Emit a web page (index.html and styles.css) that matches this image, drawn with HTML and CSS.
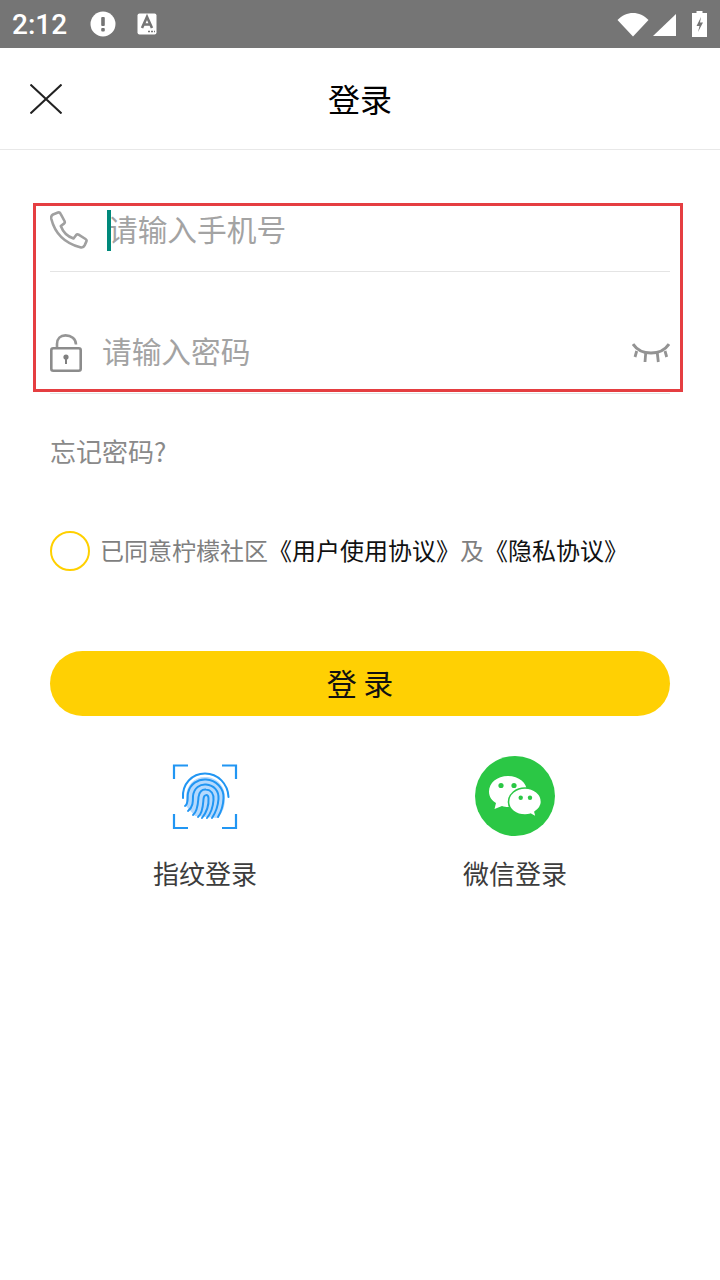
FILE: index.html
```html
<!DOCTYPE html>
<html lang="zh">

<head>
    <meta charset="UTF-8">
    <meta name="viewport" content="width=device-width, initial-scale=1.0">
    <title>登录</title>
    <link rel="stylesheet" href="styles.css">
</head>

<body>
    <div class="status-bar">
        <span class="time">2:12</span>
        <svg class="status-alert" width="26" height="26" viewBox="0 0 26 26">
            <circle cx="13" cy="13" r="12.5" fill="#fff" />
            <rect x="11.2" y="6" width="3.6" height="9" rx="1" fill="#757575" />
            <rect x="11.2" y="17" width="3.6" height="3.4" rx="1" fill="#757575" />
        </svg>
        <svg class="status-a" width="20" height="22" viewBox="0 0 20 22">
            <rect x="0.5" y="0.5" width="19" height="21" rx="2" fill="#fff" />
            <path d="M5 15 L10 4 L15 15 M7 11.5 H13" fill="none" stroke="#757575" stroke-width="2.6" />
            <path d="M11 18.5h2M14 18.5h2M17 18.5h1" stroke="#757575" stroke-width="1.6" />
        </svg>
        <span class="status-right">
            <svg class="wifi" width="32" height="25" viewBox="0 0 32 25">
                <path d="M0.5 8 C9 -1.5 23 -1.5 31.5 8 L16 24.5 Z" fill="#fff" />
            </svg>
            <svg class="signal" width="23" height="22" viewBox="0 0 23 22">
                <path d="M0 22 L23 0 V22 Z" fill="#fff" />
            </svg>
            <svg class="battery" width="15" height="26" viewBox="0 0 15 26">
                <path d="M4.5 0 H10.5 V2 H15 V26 H0 V2 H4.5 Z" fill="#fff" />
                <path d="M9 6 L4.5 15 H7.5 L6 21 L11 11.5 H8 Z" fill="#757575" />
            </svg>
        </span>
    </div>

    <header class="top-bar">
        <svg class="close-icon" width="32" height="30" viewBox="0 0 32 30">
            <path d="M0.5 0.5 L31.5 29.5 M31.5 0.5 L0.5 29.5" stroke="#222" stroke-width="2" fill="none" />
        </svg>
        <h1>登录</h1>
    </header>

    <main class="form">
        <div class="field field-phone">
            <svg class="field-icon" width="38" height="38" viewBox="0 0 38 38">
                <path d="M3 3.5 L8 1.5 C9 1.2 10 1.6 10.5 2.6 L14.5 10 C15 11 14.8 12 14 12.6 L10.8 15 C13 21 17.5 25.5 23.5 27.5 L26 24.2 C26.7 23.4 27.7 23.2 28.6 23.7 L35.5 28 C36.5 28.6 36.8 29.6 36.3 30.6 L34.6 34.4 C33.8 36 32 36.8 30.2 36.3 C14 32 4.5 21 1.2 7.5 C0.9 5.8 1.6 4.3 3 3.5 Z" fill="none" stroke="#a0a0a0" stroke-width="2.6" stroke-linejoin="round" />
            </svg>
            <span class="caret"></span>
            <span class="hint">请输入手机号</span>
        </div>
        <div class="field field-password">
            <svg class="field-icon" width="32" height="38" viewBox="0 0 32 38">
                <path d="M7 14 V10 C7 4.5 10.5 1.4 15.5 1.4 C21 1.4 26 4.5 26 10.5" fill="none" stroke="#959595" stroke-width="2.6" />
                <rect x="1.3" y="14.3" width="29.4" height="22.4" rx="2" fill="none" stroke="#8c8c8c" stroke-width="2.6" />
                <circle cx="16" cy="23" r="2.6" fill="#808080" />
                <rect x="15" y="23" width="2" height="7" fill="#808080" />
            </svg>
            <span class="hint">请输入密码</span>
            <svg class="eye-icon" width="38" height="20" viewBox="0 0 38 20">
                <path d="M1 1 C9 13 29 13 37 1" fill="none" stroke="#939393" stroke-width="3" />
                <path d="M4.7 8 L3 14 M13.7 10 L13 19 M25.3 10 L26.3 19 M33 8 L34.7 14" fill="none" stroke="#939393" stroke-width="2.8" />
            </svg>
        </div>

        <div class="forgot">忘记密码?</div>

        <div class="agree">
            <span class="radio"></span>
            <span class="agree-text">已同意柠檬社区<b>《用户使用协议》</b>及<b>《隐私协议》</b></span>
        </div>

        <button class="login-btn">登 录</button>

        <div class="other-login">
            <div class="other-item">
                <svg width="80" height="80" viewBox="0 0 80 80">
                    <path d="M9 23 V9.5 H23 M57 9.5 H71 V23 M9 58 V72 H23 M57 72 H71 V58" fill="none" stroke="#2196f3" stroke-width="2.2" />
                    <path d="M21 42 C21 29 29 21 40 21 C51 21 60 29 60 42 C60 50 58 57 52 62 L30 60 L21 50 Z" fill="#b5d9fd" />
                    <g fill="none" stroke="#2196f3" stroke-width="2" stroke-linecap="round">
                        <path d="M18 42 C17 28 27 17.5 40 17.5 C53 17.5 63 28 63.5 41" />
                        <path d="M20 50 C24 47 22 42 23 37 C25 28 33 23 41 23.5 C51 24 59 32 58.5 42 C58.3 49 56 56 53 61" />
                        <path d="M23 55 C28 51 28 46 28 40 C29 32 35 28 41 28.5 C49 29 54 35 53.5 43 C53 50 51 56 47 62" />
                        <path d="M28 59 C33 55 33 47 33.5 41 C34 36 37 33 41 33.5 C46 34 49 38 48.5 44 C48 51 46 57 42 62" />
                        <path d="M33 61 C38 57 38 49 38.5 43 C39 38 43 38 43.5 42 C44 49 41 57 37 62" />
                    </g>
                </svg>
                <span>指纹登录</span>
            </div>
            <div class="other-item">
                <svg width="80" height="80" viewBox="0 0 80 80">
                    <circle cx="40" cy="40" r="40" fill="#2bc745" />
                    <path d="M33 20 C22 20 14 27 14 35.5 C14 41 17 44.5 21 47 L19.5 53 L27 50 C29 50.6 31 51 33.5 51 C45 51 52 43 52 35.5 C52 27 44 20 33 20 Z" fill="#fff" />
                    <circle cx="26" cy="29.5" r="2.6" fill="#2bc745" />
                    <circle cx="39" cy="29.5" r="2.6" fill="#2bc745" />
                    <path d="M50 32 C41 32 33.5 38 33.5 46 C33.5 53.5 41 59 50 59 C52 59 54 58.7 55.5 58.2 L61.5 61.5 L60 56 C63.5 53.5 66.5 50 66.5 46 C66.5 38 59 32 50 32 Z" fill="#fff" stroke="#2bc745" stroke-width="1.6" />
                    <circle cx="45.7" cy="41.7" r="2.2" fill="#2bc745" />
                    <circle cx="55" cy="41.7" r="2.2" fill="#2bc745" />
                </svg>
                <span>微信登录</span>
            </div>
        </div>
    </main>

    <div class="mark"></div>
</body>

</html>
```

FILE: styles.css
```css
body {
    font-family: "Noto Sans CJK SC", "Noto Sans", sans-serif;
    margin: 0;
    padding: 0;
    background-color: #fff;
    width: 720px;
    height: 1280px;
    overflow: hidden;
    position: relative;
}

.status-bar {
    height: 48px;
    background-color: #757575;
    display: flex;
    align-items: center;
    padding: 0 13px 0 12px;
    box-sizing: border-box;
}

.time {
    font-family: Roboto, sans-serif;
    font-size: 28px;
    font-weight: 500;
    color: #fff;
    width: 78px;
}

.status-a {
    margin-left: 21px;
}

.status-right {
    margin-left: auto;
    display: flex;
    align-items: center;
}

.signal {
    margin-left: 4px;
    margin-top: 2px;
}

.battery {
    margin-left: 16px;
}

.top-bar {
    height: 102px;
    border-bottom: 1px solid #e8e8e8;
    box-sizing: border-box;
    display: flex;
    align-items: center;
    justify-content: center;
    position: relative;
}

.top-bar h1 {
    margin: 0 0 2px;
    font-size: 32px;
    font-weight: 400;
    color: #000;
}

.close-icon {
    position: absolute;
    left: 30px;
    top: 36px;
}

.form {
    padding: 55px 50px 0;
}

.field {
    display: flex;
    align-items: center;
    border-bottom: 1px solid #e4e4e4;
    box-sizing: border-box;
    position: relative;
}

.field-phone {
    height: 67px;
    padding-bottom: 16px;
}

.field-password {
    height: 122px;
    margin-bottom: 33px;
    padding-top: 40px;
}

.hint {
    font-size: 29.7px;
    color: #a3a3a3;
    margin-bottom: 4px;
}

.field-phone .hint {
    margin-left: 20px;
}

.field-password .hint {
    margin-left: 20px;
}

.caret {
    position: absolute;
    left: 57px;
    top: 5px;
    width: 4px;
    height: 41px;
    background-color: #00897b;
}

.eye-icon {
    margin-left: auto;
}

.forgot {
    font-size: 26px;
    color: #8a8a8a;
    line-height: 48px;
}

.agree {
    display: flex;
    align-items: center;
    gap: 10px;
    margin-top: 56px;
    font-size: 24px;
    color: #7f7f7f;
    white-space: nowrap;
}

.agree-text {
    margin-bottom: 4px;
}

.agree b {
    font-weight: 400;
    color: #111;
}

.radio {
    width: 36px;
    height: 36px;
    border: 2px solid #ffd000;
    border-radius: 50%;
    flex: none;
}

.login-btn {
    display: block;
    width: 100%;
    height: 65px;
    margin-top: 80px;
    background-color: #ffd003;
    border: none;
    border-radius: 33px;
    font-family: inherit;
    font-size: 30px;
    color: #111;
    padding: 0 0 4px;
}

.other-login {
    display: flex;
    margin-top: 40px;
    padding-left: 103px;
    gap: 206px;
}

.other-item {
    display: flex;
    flex-direction: column;
    align-items: center;
    gap: 18px;
    width: 104px;
    font-size: 26px;
    color: #3c3c3c;
}

.mark {
    position: absolute;
    left: 33px;
    top: 203px;
    width: 650px;
    height: 189px;
    border: 3px solid #e53e41;
    box-sizing: border-box;
}
```
